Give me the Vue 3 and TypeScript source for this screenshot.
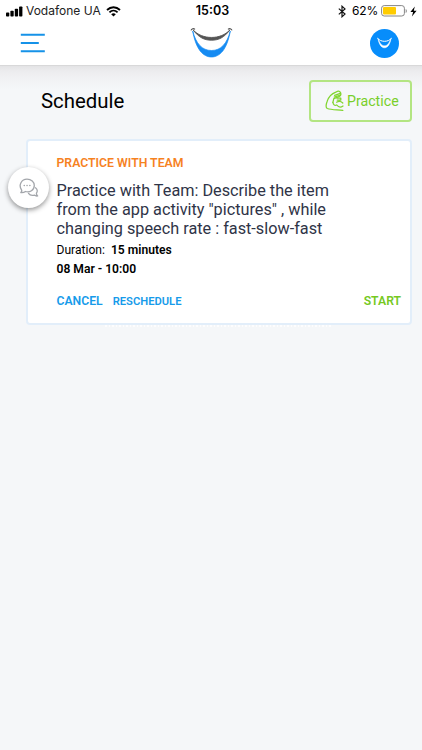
<script setup lang="ts">
interface Session {
  kind: string
  lines: string[]
  duration: string
  date: string
}

const session: Session = {
  kind: 'PRACTICE WITH TEAM',
  lines: [
    'Practice with Team: Describe the item',
    'from the app activity "pictures" , while',
    'changing speech rate : fast-slow-fast',
  ],
  duration: '15 minutes',
  date: '08 Mar - 10:00',
}
</script>

<template>
  <div class="screen">
    <header class="top">
      <div class="status">
        <div class="carrier">
          <svg class="signal" width="17" height="11" viewBox="0 0 17 11">
            <rect x="0" y="6.6" width="3.3" height="3.9" rx="0.8" />
            <rect x="4.4" y="4.8" width="3.3" height="5.7" rx="0.8" />
            <rect x="8.8" y="2.7" width="3.3" height="7.8" rx="0.8" />
            <rect x="13.1" y="0.4" width="3.3" height="10.1" rx="0.8" />
          </svg>
          <span class="network">Vodafone UA</span>
          <svg class="wifi" width="15" height="11" viewBox="0 0 15 11">
            <path d="M1 4C4.8.3 10.2.3 14 4M3.4 6.3c2.4-2.2 5.8-2.2 8.2 0" fill="none" stroke="#000" stroke-width="1.8" />
            <path d="M7.5 10.5 5.2 8.2c1.3-1.2 3.3-1.2 4.6 0z" />
          </svg>
        </div>
        <span class="clock">15:03</span>
        <div class="power">
          <svg width="8" height="13" viewBox="0 0 8 13">
            <path d="M.8 3.6 7 9.1 4 11.8V1.2L7 3.9.8 9.4" fill="none" stroke="#111" stroke-width="1.2" />
          </svg>
          <span class="percent">62%</span>
          <svg class="battery" width="27" height="12" viewBox="0 0 27 12">
            <rect x=".6" y=".6" width="22.8" height="10.4" rx="2.6" fill="#fff" stroke="#858585" />
            <rect x="2" y="2" width="13" height="7.6" rx="1" fill="#fc0" />
            <path d="M24.7 4v4c1.5-.6 1.5-3.4 0-4z" fill="#858585" />
          </svg>
          <svg width="7" height="11" viewBox="0 0 7 11">
            <path d="M4.8.4.4 6.1h2.7L1.9 10.6 6.6 4.7H3.8z" />
          </svg>
        </div>
      </div>
      <nav class="bar">
        <button class="menu" aria-label="Menu">
          <svg width="25" height="20" viewBox="0 0 25 20">
            <path d="M.8 1.8h24M.8 10h18M.8 18.2h24" stroke="#1692e8" stroke-width="2" />
          </svg>
        </button>
        <svg class="logo" width="43" height="32" viewBox="0 0 43 32">
          <path d="M2.7 4C6 23 13.500 30 21.500 30S37 23 40.300 4C37 16.500 31 23.500 21.500 23.500S6 16.500 2.700 4z" fill="#168bf2" stroke="#168bf2" stroke-width=".7" />
          <path d="M3 2.800C12 13 31 13 40 2.800C34 10.800 28.500 13.200 21.500 13.200S9 10.800 3 2.800z" fill="#555" stroke="#555" stroke-width=".9" />
          <path d="M1 3.400C1.600 1.700 3.500 1 5 2.400M42 3.400C41.400 1.700 39.500 1 38 2.400" fill="none" stroke="#555" stroke-width="1.100" />
        </svg>
        <button class="avatar" aria-label="Profile">
          <svg width="15" height="12" viewBox="0 0 15 12">
            <path d="M1 1.400C2 8 4.800 10.800 7.500 10.800S13 8 14 1.400C12 6.800 10 8.800 7.500 8.800S3 6.800 1 1.400z" fill="#fff" stroke="#fff" stroke-width=".5" />
            <path d="M.3 1.100C4 5.400 11 5.400 14.700 1.100" fill="none" stroke="#fff" stroke-width="1" />
          </svg>
        </button>
      </nav>
    </header>

    <main class="content">
      <div class="heading">
        <h1 class="title">Schedule</h1>
        <button class="practice">
          <svg width="20" height="22" viewBox="0 0 20 22" fill="none" stroke="#80d52e" stroke-width="1.250" stroke-linecap="round" stroke-linejoin="round">
            <path d="M17.800 20.400C12 19.700 6.500 20 2.300 18.500C.5 17.500 1 14.500 2.100 11.500C3.600 7 6.700 3.700 10.800 2.200C13 .9 14.500 .8 15.500 2.600C16.200 4.300 15.500 6 14 6.700L8.800 8.600L7.900 12.400" />
            <path d="M9.600 5.400 15.300 3.400M9.200 7.100 15.600 5M12 8.200h3.800v1.900h-3.600M7.900 12.400c.4 2.600 1.900 3.500 3.900 2.600M11.600 12.200c2.200-1.300 4.500-.9 6.200.8M11.800 15c1.600 2.200 4 2.500 6.200 1" />
          </svg>
          <span>Practice</span>
        </button>
      </div>

      <article class="card">
        <button class="chat" aria-label="Chat">
          <svg width="20" height="20" viewBox="0 0 20 20" fill="none" stroke="#a3a6ab" stroke-width="1.300" stroke-linejoin="round" stroke-linecap="round">
            <path d="M1.800 14.500c1-.8 1.200-1.700.7-2.600C-.8 7 2.500 1.200 8 1.200c4.300 0 7.300 2.800 7.300 6.300 0 4.700-4.600 7.200-8.800 6-1.500 1-3 1.300-4.700 1z" />
            <path d="M16.500 9.800c2 1.500 2.300 3.700.9 5.400 0 1.300.4 2 1.300 2.700-1.300.3-2.400 0-3.400-.8-2.300.6-4.600 0-5.800-1.700" />
            <path d="M5.200 7.600h.1M8 7.600h.1M10.800 7.600h.1" stroke-width="1.500" />
          </svg>
        </button>
        <p class="kind">{{ session.kind }}</p>
        <h2 class="task">
          <span v-for="line in session.lines" :key="line">{{ line }}</span>
        </h2>
        <p class="meta"><span class="label">Duration:</span><b>{{ session.duration }}</b></p>
        <p class="meta date"><b>{{ session.date }}</b></p>
        <div class="actions">
          <button class="cancel">CANCEL</button>
          <button class="reschedule">RESCHEDULE</button>
          <button class="start">START</button>
        </div>
      </article>
      <div class="trace"></div>
    </main>
  </div>
</template>

<style>
body {
  background: #f5f7f9;
}
</style>

<style scoped>
.screen {
  height: 750px;
  overflow: hidden;
  background: #f5f7f9;
  color: #000;
  font-family: Roboto, "Liberation Sans", sans-serif;
}
button {
  margin: 0;
  padding: 0;
  border: 0;
  background: none;
  font: inherit;
  color: inherit;
}
h1, h2, p {
  margin: 0;
  font-weight: 400;
}
svg {
  display: block;
  flex: none;
}
.top {
  height: 66px;
  background: #fff;
  border-bottom: 1px solid #d8d8d9;
  box-sizing: border-box;
}
.status {
  display: grid;
  grid-template-columns: 1fr auto 1fr;
  align-items: center;
  height: 22px;
  padding: 0 5px 0 6px;
  font-family: Inter, sans-serif;
  font-size: 12px;
  line-height: 22px;
}
.carrier, .power {
  display: flex;
  align-items: center;
}
.network {
  margin: 0 5px 0 3px;
  color: #222;
}
.clock {
  margin-left: 2px;
  font-weight: 600;
  font-size: 12.5px;
}
.power {
  justify-content: flex-end;
}
.percent {
  margin: 0 3px 0 6px;
  letter-spacing: -0.2px;
}
.battery {
  margin-right: 2px;
}
.bar {
  display: grid;
  grid-template-columns: 1fr auto 1fr;
  align-items: center;
  height: 42px;
  padding: 0 23px 0 20px;
}
.menu {
  justify-self: start;
}
.logo {
  margin: 0 0 1px 3px;
}
.avatar {
  justify-self: end;
  display: grid;
  place-items: center;
  width: 29px;
  height: 29px;
  border-radius: 50%;
  background: #078dfb;
}
.content {
  height: 684px;
  padding: 14px 10px 0 26px;
  box-sizing: border-box;
  background: linear-gradient(#e3e3e5, #ececee 5px, #f1f2f4 13px, #f5f7f9 24px);
}
.heading {
  display: flex;
  align-items: center;
  justify-content: space-between;
  height: 42px;
  padding-left: 15px;
}
.title {
  font-size: 20.4px;
  line-height: 26px;
}
.practice {
  display: flex;
  align-items: center;
  gap: 2px;
  width: 103px;
  height: 42px;
  padding-left: 14px;
  border: 2px solid #b3e582;
  border-radius: 4px;
  box-sizing: border-box;
  color: #79cf2b;
  font-size: 14.2px;
}
.card {
  position: relative;
  height: 186px;
  margin-top: 17px;
  padding: 15px 9px 0 28.5px;
  border: 2px solid #e2eefa;
  border-radius: 4px;
  box-sizing: border-box;
  background: #fff;
}
.chat {
  position: absolute;
  top: 26px;
  left: -20px;
  display: grid;
  place-items: center;
  width: 41px;
  height: 41px;
  border-radius: 50%;
  background: #fff;
  box-shadow: 0 2px 5px rgba(0, 0, 0, 0.42);
}
.kind {
  color: #f6821f;
  font-weight: 600;
  font-size: 12.25px;
  line-height: 14px;
}
.task {
  margin-top: 11px;
  color: #2f3447;
  font-size: 16.25px;
  line-height: 19px;
}
.task span {
  display: block;
  white-space: nowrap;
}
.meta {
  margin-top: 3px;
  font-size: 12.1px;
  line-height: 19px;
}
.label {
  margin-right: 6px;
}
.meta b {
  font-weight: 600;
}
.date {
  margin-top: 0;
}
.actions {
  display: flex;
  align-items: center;
  height: 16px;
  margin-top: 14px;
  font-size: 12.2px;
  font-weight: 600;
  color: #169bea;
}
.reschedule {
  margin-left: 10px;
  font-size: 11.2px;
}
.start {
  margin-left: auto;
  color: #76c91f;
}
.trace {
  width: 227px;
  height: 2px;
  margin-left: 79px;
  background: repeating-linear-gradient(90deg, #fff 0 2px, transparent 2px 4px, #fff 4px 5px, transparent 5px 7px);
  opacity: 0.8;
}
</style>
